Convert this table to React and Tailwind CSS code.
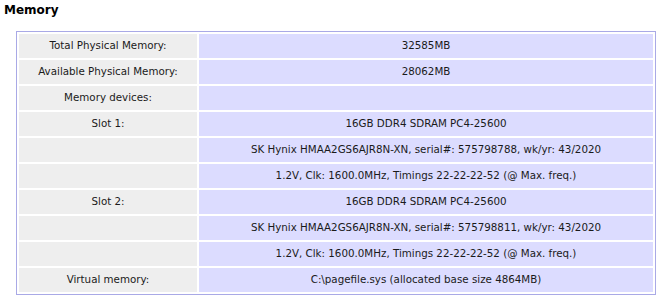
const rows = [
  ['Total Physical Memory:', '32585MB'],
  ['Available Physical Memory:', '28062MB'],
  ['Memory devices:', ''],
  ['Slot 1:', '16GB DDR4 SDRAM PC4-25600'],
  ['', 'SK Hynix HMAA2GS6AJR8N-XN, serial#: 575798788, wk/yr: 43/2020'],
  ['', '1.2V, Clk: 1600.0MHz, Timings 22-22-22-52 (@ Max. freq.)'],
  ['Slot 2:', '16GB DDR4 SDRAM PC4-25600'],
  ['', 'SK Hynix HMAA2GS6AJR8N-XN, serial#: 575798811, wk/yr: 43/2020'],
  ['', '1.2V, Clk: 1600.0MHz, Timings 22-22-22-52 (@ Max. freq.)'],
  ['Virtual memory:', 'C:\\pagefile.sys (allocated base size 4864MB)'],
];

export default function App() {
  return (
    <div className="w-[669px] h-[305px] bg-white overflow-hidden font-['DejaVu_Sans',sans-serif] text-[#1a1a1a]">
      <h2 className="pl-[4px] pt-[2px] h-[31px] text-[12px] font-bold leading-[16px] text-black">Memory</h2>
      {/* memory summary table */}
      <div className="ml-[16px] w-[640px] border border-[#a9a9e6] p-[2px]">
        <div className="grid grid-cols-[178px_454px] gap-[2px]">
          {rows.map(([label, value], i) => (
            <div key={i} className="contents">
              <div className="h-[24px] bg-[#eeeeee] flex items-center justify-center text-[10.3px]">{label}</div>
              <div className="h-[24px] bg-[#dcdcff] flex items-center justify-center text-[10.3px]">{value}</div>
            </div>
          ))}
        </div>
      </div>
    </div>
  );
}
